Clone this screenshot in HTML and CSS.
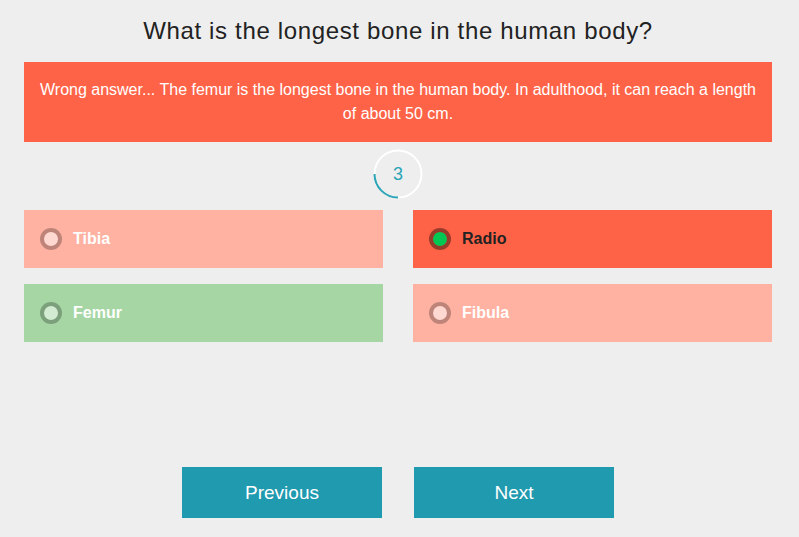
FILE: index.html
```html
<!DOCTYPE html>
<html>
<head>
<meta charset="utf-8">
<link rel="stylesheet" href="styles.css">
</head>
<body>
<div class="quiz">
  <h1 class="question">What is the longest bone in the human body?</h1>
  <div class="feedback">Wrong answer... The femur is the longest bone in the human body. In adulthood, it can reach a length of about 50 cm.</div>
  <div class="timer">
    <svg class="timer-ring" width="50" height="50" viewBox="0 0 50 50">
      <circle cx="25" cy="25" r="23.5" fill="none" stroke="#ffffff" stroke-width="2"/>
      <path d="M1.5 25 A23.5 23.5 0 0 0 25 48.5" fill="none" stroke="#2aa4b6" stroke-width="2"/>
    </svg>
    <span class="timer-num">3</span>
  </div>
  <div class="options">
    <div class="option wrong-light"><span class="radio"></span><span class="label">Tibia</span></div>
    <div class="option wrong-selected"><span class="radio checked"></span><span class="label dark">Radio</span></div>
    <div class="option correct"><span class="radio"></span><span class="label">Femur</span></div>
    <div class="option wrong-light"><span class="radio"></span><span class="label">Fibula</span></div>
  </div>
  <div class="nav">
    <button class="btn">Previous</button>
    <button class="btn">Next</button>
  </div>
</div>
</body>
</html>
```
FILE: styles.css
```css
* { box-sizing: border-box; }
html, body { margin: 0; padding: 0; }
body {
  background: #eeeeee;
  font-family: "Liberation Sans", Arial, sans-serif;
  width: 799px;
  height: 537px;
  overflow: hidden;
}
.quiz {
  padding: 0 27px 0 24px;
  display: flex;
  flex-direction: column;
}
.question {
  margin: 17px 0 0 0;
  height: 45px;
  font-size: 24px;
  font-weight: normal;
  letter-spacing: 0.65px;
  color: #222222;
  text-align: center;
  line-height: 28px;
}
.feedback {
  background: #ff6347;
  color: #ffffff;
  font-size: 16px;
  line-height: 24px;
  text-align: center;
  padding: 16px 14px 16px;
  height: 80px;
}
.timer {
  position: relative;
  width: 50px;
  height: 50px;
  margin: 7px auto 11px;
}
.timer-ring { display: block; }
.timer-num {
  position: absolute;
  left: 0; top: 0;
  width: 50px;
  height: 50px;
  line-height: 50px;
  text-align: center;
  font-size: 18px;
  color: #2aa4b6;
}
.options {
  display: grid;
  grid-template-columns: 359px 359px;
  column-gap: 30px;
  row-gap: 16px;
}
.option {
  height: 58px;
  display: flex;
  align-items: center;
  padding-left: 16px;
}
.wrong-light { background: #ffb1a2; }
.wrong-selected { background: #ff6347; }
.correct { background: #a5d6a4; }
.radio {
  width: 22px;
  height: 22px;
  border-radius: 50%;
  border: 4px solid rgba(0, 0, 0, 0.25);
  background-color: rgba(255, 255, 255, 0.5);
  background-clip: padding-box;
  margin-right: 11px;
  flex: none;
}
.radio.checked {
  background-color: #00c853;
  border-color: rgba(0, 0, 0, 0.4);
}
.label {
  font-size: 16px;
  font-weight: bold;
  color: #ffffff;
}
.label.dark { color: #222222; }
.nav {
  display: flex;
  justify-content: center;
  gap: 32px;
  margin-top: 125px;
}
.btn {
  width: 200px;
  height: 51px;
  background: #209aaf;
  border: none;
  color: #ffffff;
  font-family: "Liberation Sans", Arial, sans-serif;
  font-size: 19px;
  padding: 0;
}
```
